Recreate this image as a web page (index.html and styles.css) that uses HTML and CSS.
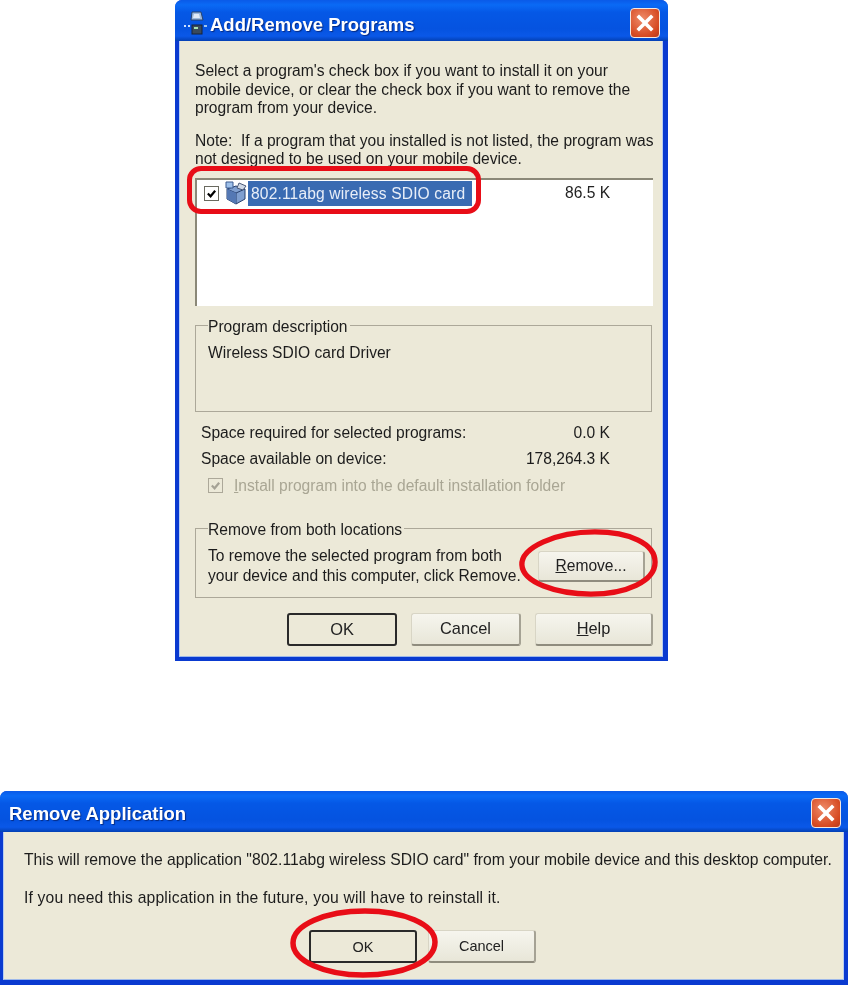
FILE: index.html
```html
<!DOCTYPE html>
<html lang="en">
<head>
<meta charset="utf-8">
<title>Add/Remove Programs</title>
<link rel="stylesheet" href="styles.css">
</head>
<body>
<section class="dialog dialog-programs">
  <header class="titlebar">
    <svg class="title-icon" viewBox="0 0 26 26" aria-hidden="true">
      <path d="M9 2h9l2 8H8z" fill="#9db8dc" stroke="#26426e"/>
      <path d="M11 4h5l1 4h-7z" fill="#dfe9f6"/>
      <rect x="9" y="15" width="10" height="9" fill="#3a4a5c" stroke="#16233a"/>
      <rect x="11" y="17" width="4" height="2" fill="#a6e0b0"/>
      <path d="M1 16h2M5 16h2" stroke="#cfe2ff" stroke-width="2"/>
      <path d="M21 16h3" stroke="#9fc4f0" stroke-width="2"/>
    </svg>
    <h1 class="title">Add/Remove Programs</h1>
    <button class="close" aria-label="Close">
      <svg viewBox="0 0 28 28"><path d="M8 8l12 12M20 8L8 20" stroke="#fff" stroke-width="3.6" stroke-linecap="square"/></svg>
    </button>
  </header>
  <div class="client programs-client">
    <p class="para">Select a program's check box if you want to install it on your<br>mobile device, or clear the check box if you want to remove the<br>program from your device.</p>
    <p class="para note">Note:&nbsp; If a program that you installed is not listed, the program was<br>not designed to be used on your mobile device.</p>
    <div class="listbox">
      <div class="list-row">
        <span class="check"><svg viewBox="0 0 12 12"><path d="M2 6l3 3 5-6" fill="none" stroke="#000" stroke-width="2.4"/></svg></span>
        <svg class="pkg" viewBox="0 0 24 24" aria-hidden="true">
          <path d="M3 8l9-3 9 3v10l-9 5-9-5z" fill="#7f9fd0" stroke="#27406e"/>
          <path d="M3 8l9 4 9-4M12 12v11" fill="none" stroke="#27406e"/>
          <path d="M3 8l9 4v11l-9-5z" fill="#5478b4"/>
          <path d="M2 1h7v6H2z" fill="#9ec0ea" stroke="#3a5a90"/>
          <path d="M15 2l7 3-3 4-6-2z" fill="#cfd8e6" stroke="#4a5a78"/>
        </svg>
        <span class="selected">802.11abg wireless SDIO card</span>
        <span class="size">86.5 K</span>
      </div>
    </div>
    <div class="group group-desc">
      <div class="legend">Program description</div>
      <div class="group-text">Wireless SDIO card Driver</div>
    </div>
    <div class="stats">
      <div class="stat"><span>Space required for selected programs:</span><span>0.0 K</span></div>
      <div class="stat"><span>Space available on device:</span><span>178,264.3 K</span></div>
    </div>
    <div class="install">
      <span class="check disabled"><svg viewBox="0 0 12 12"><path d="M2 6l3 3 5-6" fill="none" stroke="#a5a295" stroke-width="2.4"/></svg></span>
      <span class="disabled-text"><u>I</u>nstall program into the default installation folder</span>
    </div>
    <div class="group group-remove">
      <div class="legend">Remove from both locations</div>
      <div class="remove-row">
        <div class="remove-text">To remove the selected program from both<br>your device and this computer, click Remove.</div>
        <button class="btn btn-remove"><u>R</u>emove...</button>
      </div>
    </div>
    <div class="actions">
      <button class="btn btn-default btn-a">OK</button>
      <button class="btn btn-a">Cancel</button>
      <button class="btn btn-help"><u>H</u>elp</button>
    </div>
  </div>
  <div class="mark mark-row"></div>
  <svg class="oval oval-remove" viewBox="0 0 146 72" aria-hidden="true"><path d="M5 38C4 20 40 4 80 4c36 0 62 12 62 31 0 20-30 33-66 33C40 68 6 56 5 38z" fill="none" stroke="#e80d17" stroke-width="5.5"/></svg>
</section>

<section class="dialog dialog-remove">
  <header class="titlebar titlebar-small">
    <h1 class="title title-small">Remove Application</h1>
    <button class="close close-small" aria-label="Close">
      <svg viewBox="0 0 28 28"><path d="M8 8l12 12M20 8L8 20" stroke="#fff" stroke-width="3.6" stroke-linecap="square"/></svg>
    </button>
  </header>
  <div class="client remove-client">
    <p class="para wide">This will remove the application "802.11abg wireless SDIO card" from your mobile device and this desktop computer.</p>
    <p class="para wide second">If you need this application in the future, you will have to reinstall it.</p>
    <div class="actions-center">
      <button class="btn btn-default btn-b">OK</button>
      <button class="btn btn-b">Cancel</button>
    </div>
  </div>
  <svg class="oval oval-ok" viewBox="0 0 150 72" aria-hidden="true"><path d="M4 36C4 18 36 4 76 4c38 0 70 13 70 31 0 20-32 33-72 33C36 68 4 54 4 36z" fill="none" stroke="#e80d17" stroke-width="5.5"/></svg>
</section>
</body>
</html>
```

FILE: styles.css
```css
* { box-sizing: border-box; }
html, body { margin: 0; padding: 0; background: #fff; }
body { position: relative; width: 848px; height: 985px; overflow: hidden; font-family: "Liberation Sans", Arial, sans-serif; font-size: 15.6px; color: #1c1c1c; }

.dialog { position: absolute; display: flex; flex-direction: column; background: #0a3ad0; border-radius: 7px 7px 0 0; filter: blur(0.5px); }
.dialog-programs { left: 175px; top: 0; width: 493px; height: 661px; padding: 0 5px 4px 4px; }
.dialog-remove { left: 0; top: 791px; width: 848px; height: 194px; padding: 0 4px 5px 3px; }

.titlebar { flex: none; height: 41px; margin: 0 -5px 0 -4px; padding: 5px 8px 0 8px; display: flex; align-items: center; gap: 1px; border-radius: 7px 7px 0 0; background: linear-gradient(180deg, #0a5ae8 0%, #0a6af5 12%, #0558e6 30%, #0553e0 70%, #0a58e8 88%, #0340b4 100%); }
.titlebar-small { margin: 0 -4px 0 -3px; padding: 3px 7px 0 9px; }
.title-icon { width: 26px; height: 26px; flex: none; }
.title { flex: 1; margin: 0; padding-top: 3px; font-size: 18.5px; font-weight: 700; color: #fff; text-shadow: 1px 1px 1px #062a80; white-space: nowrap; }
.title-small { padding-top: 2px; font-size: 18.5px; }
.close { flex: none; width: 30px; height: 30px; padding: 0; border: 1px solid #f4e8e0; border-radius: 4px; background: radial-gradient(circle at 40% 35%, #ee8a68, #d64a22 70%, #b8381a); }
.close svg { display: block; width: 100%; height: 100%; }

.client { flex: 1; min-height: 0; background: #ece9d8; border-left: 1px solid #b8cdf0; border-right: 1px solid #b8cdf0; border-bottom: 1px solid #9db8ea; }
.programs-client { padding: 21px 9px 0 15px; }
.remove-client { padding: 18px 0 0 20px; }

.para { margin: 0; line-height: 18.5px; white-space: nowrap; }
.note { margin-top: 14px; }
.wide { font-size: 15.7px; line-height: 20px; }
.second { margin-top: 18px; letter-spacing: 0.17px; }

.listbox { margin-top: 9px; height: 128px; background: #fff; border-top: 2px solid #8b8878; border-left: 2px solid #8b8878; padding: 1px 0 0 7px; }
.list-row { display: flex; align-items: center; height: 25px; }
.check { flex: none; width: 15px; height: 15px; border: 1px solid #6a6a60; background: #fff; padding: 1px; display: block; }
.check svg { display: block; width: 100%; height: 100%; }
.pkg { flex: none; width: 24px; height: 24px; margin-left: 5px; }
.selected { flex: none; width: 224px; height: 25px; line-height: 25px; padding-left: 3px; background: #3a6bb2; color: #e8eef8; white-space: nowrap; letter-spacing: 0.14px; }
.size { margin-left: 93px; color: #222; }

.group { border: 1px solid #aca899; padding: 0 12px; }
.legend { width: fit-content; margin-top: -8px; padding: 0 2px 0 0; height: 18px; line-height: 18px; background: #ece9d8; }
.group-desc { margin-top: 19px; height: 87px; margin-right: 1px; }
.group-text { margin-top: 8px; line-height: 18px; }

.stats { margin-top: 12px; padding: 0 43px 0 6px; display: flex; flex-direction: column; gap: 8px; }
.stat { display: flex; justify-content: space-between; height: 18px; line-height: 18px; }
.install { margin-top: 9px; margin-left: 13px; display: flex; align-items: center; gap: 11px; height: 18px; }
.check.disabled { background: #ece9d8; border-color: #aca899; }
.disabled-text { color: #a9a694; white-space: nowrap; }

.group-remove { margin-top: 33px; height: 70px; margin-right: 1px; }
.remove-row { display: flex; justify-content: space-between; align-items: flex-start; margin-right: -6px; }
.remove-text { margin-top: 7px; line-height: 20px; white-space: nowrap; }
.btn-remove { width: 107px; height: 31px; margin-top: 12px; margin-left: -40px; font-size: 16px; }

.btn { padding: 0; font: inherit; color: #222; background: linear-gradient(180deg, #f6f5ee, #e8e6d8); border: 1px solid #d8d5c5; border-right: 2px solid #a5a294; border-bottom: 2px solid #8f8c7e; border-radius: 3px; }
.btn-default { border: 2px solid #2a2a2a; background: #ece9d8; }
.actions { margin-top: 15px; display: flex; justify-content: flex-end; gap: 14px; }
.btn-a { width: 110px; height: 33px; font-size: 16.4px; }
.btn-help { width: 118px; height: 33px; font-size: 16.4px; }

.actions-center { margin-top: 22px; padding-left: 285px; display: flex; gap: 11px; }
.btn-b { width: 108px; height: 33px; font-size: 14.5px; }

.mark { position: absolute; left: 12px; top: 166px; width: 294px; height: 48px; border: 5px solid #e80d17; border-radius: 14px; }
.oval { position: absolute; }
.oval-remove { left: 340px; top: 528px; width: 146px; height: 70px; }
.oval-ok { left: 287px; top: 116px; width: 154px; height: 72px; }
```
